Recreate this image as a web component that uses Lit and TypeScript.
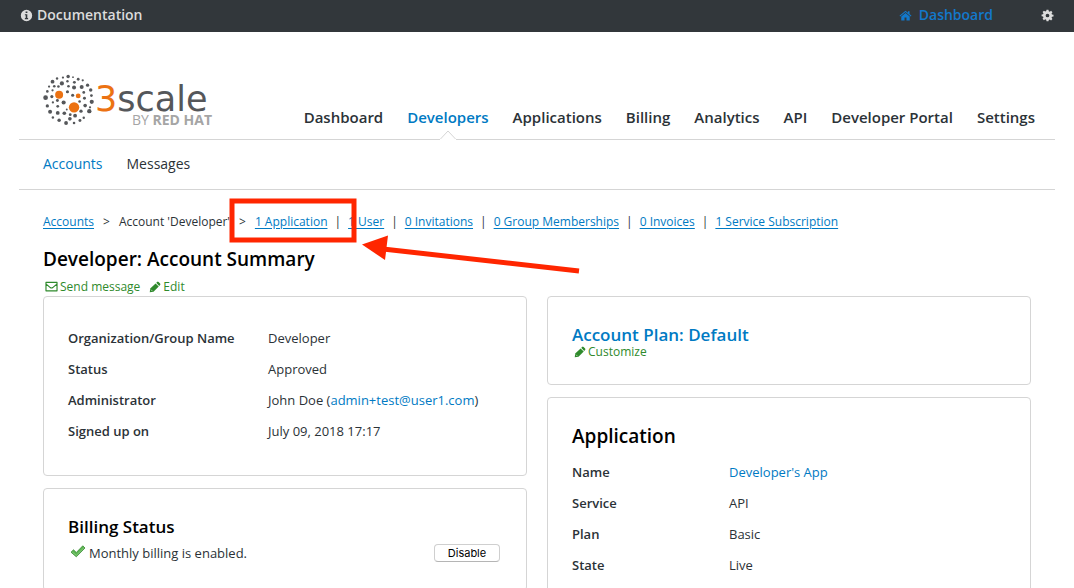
import { LitElement, html, svg, css } from "lit";
import { customElement } from "lit/decorators.js";
import { classMap } from "lit/directives/class-map.js";

const INFO = svg`<path fill-rule="evenodd" d="M8 1a7 7 0 1 1 0 14A7 7 0 0 1 8 1zM6.900 3v2h2.200V3zM6 6.500v1.300h1v3.400H6v1.300h4v-1.300H9V6.500z"/>`;
const HOME = svg`<path d="M8 2 .600 8.200l.900 1L8 3.800l6.500 5.400.900-1-2.400-2V2.700h-2v1.800z"/><path d="M8 5 2.800 9.300V14h4v-3.500h2.400V14h4V9.300z"/>`;
const COG = svg`<path fill-rule="evenodd" d="M6.800 1h2.400l.4 1.900 1.200.5 1.600-1.100 1.700 1.700-1.100 1.600.5 1.200 1.900.4v2l-1.900.4-.5 1.200 1.100 1.600-1.700 1.700-1.600-1.100-1.200.5L9.200 15H6.800l-.4-1.900-1.200-.5-1.600 1.100-1.700-1.700L3 10.400l-.5-1.200L.7 8.800V6.900l1.800-.4L3 5.300 1.900 3.700 3.600 2l1.600 1.100 1.200-.5zM8 5.700a2.300 2.300 0 1 0 0 4.600 2.300 2.300 0 0 0 0-4.600z"/>`;
const MAIL = svg`<path fill="none" stroke="currentColor" stroke-width="1.400" stroke-linejoin="round" d="M1.200 3h13.600v10.300H1.200zM1.500 5l5 4.300q1.500 1.100 3 0l5-4.300"/>`;
const PENCIL = svg`<path d="M1 15 1.600 10 8.800 3.200l4.200 4.200L6 14.400zM9.600 2.400l1.300-1.200q.9-.8 1.900.1l2 2q.9.900 0 1.900l-1.200 1.300z"/><path d="m2.600 11.500 2 2" stroke="#fff" stroke-width=".8"/>`;

const icon = (shape: unknown, size = "") =>
  html`<svg class="icon ${size}" viewBox="0 0 16 16" aria-hidden="true">${shape}</svg>`;

/* Dots of the brand globe: x, y, radius. */
const DOTS = [
  [69, 11, 2.6], [84, 8, 4], [98, 10, 2], [52, 14, 2.8], [113, 16, 3.2], [39, 23, 4.4], [66, 28, 4.8], [82, 22, 2.8],
  [102, 25, 3.4], [126, 19, 2.6], [123, 38, 4.6], [140, 33, 3.8], [56, 37, 3], [29, 37, 2.6], [44, 36, 3], [101, 40, 4.6],
  [85, 36, 3], [149, 47, 4], [82, 52, 3.6], [24, 51, 3], [39, 48, 2.6], [129, 54, 3.2], [151, 63, 3.2], [97, 62, 3.6],
  [19, 69, 5.4], [37, 66, 3.6], [117, 80, 3], [131, 71, 3.4], [152, 81, 4.8], [53, 77, 3.4], [40, 83, 2.6], [71, 83, 4.8],
  [24, 93, 3.8], [54, 94, 3.2], [133, 92, 4.2], [147, 97, 2.6], [80, 103, 2.2], [32, 110, 4.6], [54, 113, 4.4],
  [73, 114, 4.2], [90, 118, 3.2], [104, 121, 4.4], [121, 108, 3.8], [145, 108, 5], [40, 126, 2.8],
  [89, 130, 4.2], [129, 127, 2.8], [58, 134, 4], [118, 135, 3.4], [78, 142, 4.4], [101, 142, 3],
];

const MAIN_NAV = ["Dashboard", "Developers", "Applications", "Billing", "Analytics", "API", "Developer Portal", "Settings"];
const COUNTS = ["1 Application", "1 User", "0 Invitations", "0 Group Memberships", "0 Invoices", "1 Service Subscription"];

@customElement("app-root")
export class AppRoot extends LitElement {
  static styles = css`
    :host {
      display: block;
      height: 100vh;
      overflow: hidden;
      background: #fff;
      color: #2b3237;
      font: 12px/20px "Open Sans", "Noto Sans", sans-serif;
    }
    a { color: #007ac3; text-decoration: none; }
    h1, h2, dl, dd, p { margin: 0; }
    h1, h2 { color: #000; font-weight: 600; }
    .icon { width: 13px; height: 13px; fill: currentColor; flex: none; }
    .icon.small { width: 12px; height: 12px; }

    .topbar {
      display: flex;
      align-items: center;
      height: 32px;
      padding: 0 20px 2px;
      box-sizing: border-box;
      background: #32373b;
      font-size: 14px;
      font-weight: 600;
    }
    .topbar a { display: flex; align-items: center; gap: 4px; color: #dcdcdc; }
    .topbar .home { margin-left: auto; gap: 7px; color: #1279cc; }
    .topbar .gear {
      display: flex;
      margin-left: 48px;
      padding: 0;
      border: 0;
      background: none;
      color: #dcdcdc;
    }

    .page { padding: 0 19px; }
    .header {
      display: flex;
      justify-content: space-between;
      height: 107px;
      padding: 0 20px 0 24px;
      border-bottom: 1px solid #d5d5d5;
    }
    .logo { display: block; width: 172px; height: 54px; margin-top: 42px; flex: none; }
    .main-nav { display: flex; gap: 24px; padding-top: 75px; font-size: 15px; font-weight: 600; white-space: nowrap; }
    .main-nav a { position: relative; color: #2b3237; }
    .main-nav .current { color: #007ac3; }
    .caret { position: absolute; left: 50%; bottom: -1px; width: 18px; height: 10px; margin-left: -9px; }

    .sub-nav {
      display: flex;
      align-items: center;
      gap: 24px;
      height: 47px;
      padding: 0 24px 2px;
      border-bottom: 1px solid #d5d5d5;
      font-size: 14px;
    }
    .sub-nav .plain { color: #2b3237; }

    .content { padding: 0 24px; }
    .crumbs { position: relative; display: flex; gap: 9px; padding-top: 22px; white-space: nowrap; }
    .crumbs a { text-decoration: underline; text-underline-offset: 2px; }
    .counts { display: flex; gap: 7px; }
    .callout { position: absolute; left: 183px; top: 6px; width: 358px; height: 80px; pointer-events: none; }
    h1 { margin-top: 13px; font-size: 19px; line-height: 28px; }
    .actions { display: flex; gap: 9px; padding: 4px 2px 0; height: 19px; }
    .action { display: inline-flex; align-items: center; gap: 2px; color: #2f8a2c; }

    .columns { display: grid; grid-template-columns: 1fr 1fr; gap: 20px; }
    .column { display: flex; flex-direction: column; gap: 12px; }
    .card { padding: 26px 24px 28px; border: 1px solid #d5d5d5; border-radius: 4px; }
    .card h2 { font-size: 17px; line-height: 24px; }
    .card .major { font-size: 19px; }
    .card .action { display: flex; padding-left: 2px; line-height: 9px; height: 9px; }
    .facts { display: grid; grid-template-columns: 200px 1fr; font-size: 13px; line-height: 31px; }
    .facts dt { font-weight: 600; }
    .facts.compact { grid-template-columns: 157px 1fr; margin-top: 9px; }
    .billing { display: flex; align-items: center; justify-content: space-between; margin-top: 5px; height: 18px; font-size: 13px; }
    .billing p { display: flex; align-items: center; gap: 3px; padding-left: 2px; }
    .tick { width: 16px; height: 16px; }
    .disable {
      width: 66px;
      height: 18px;
      margin-right: 2px;
      padding: 0;
      border: 1px solid #cfcfcf;
      border-bottom-color: #b5b5b5;
      border-radius: 4px;
      background: #fff;
      color: #000;
      font: 11px/16px Inter, "Liberation Sans", sans-serif;
    }
  `;

  private logo() {
    return html`<svg class="logo" viewBox="0 0 172 54" role="img" aria-label="3scale by Red Hat">
      <g transform="translate(-4 -1) scale(0.347)" fill="#55575a">
        ${DOTS.map(([x, y, r]) => svg`<circle cx=${x} cy=${y + 2} r=${r * 1.25}></circle>`)}
        <g fill="#ec7212">
          <circle cx="58" cy="63" r="11.500"></circle>
          <circle cx="113" cy="66" r="7"></circle>
          <circle cx="101" cy="99" r="15"></circle>
        </g>
      </g>
      <g font-family="DejaVu Sans">
        <text x="52" y="37" font-size="35" fill="#55575a"><tspan fill="#ec7212">3</tspan>scale</text>
        <text x="89" y="51" font-size="14" fill="#a5a5a5" font-family="Open Sans">BY <tspan font-weight="700">RED HAT</tspan></text>
      </g>
    </svg>`;
  }

  private facts(rows: [string, unknown][], compact = false) {
    return html`<dl class=${classMap({ facts: true, compact })}>
      ${rows.map(([name, value]) => html`<dt>${name}</dt><dd>${value}</dd>`)}
    </dl>`;
  }

  render() {
    return html`
      <div class="topbar">
        <a href="#docs">${icon(INFO)}Documentation</a>
        <a class="home" href="#dashboard">${icon(HOME)}Dashboard</a>
        <button class="gear" aria-label="Account settings">${icon(COG)}</button>
      </div>
      <div class="page">
        <header class="header">
          ${this.logo()}
          <nav class="main-nav" aria-label="Main">
            ${MAIN_NAV.map((label) => {
              const current = label === "Developers";
              return html`<a href="#nav" class=${classMap({ current })}>${label}${current
                ? html`<svg class="caret" viewBox="0 0 18 10"><path d="M0 9.500h1L9 1l8 8.500h1" fill="#fff" stroke="#d5d5d5"></path><path d="M1 9.500h16" stroke="#fff"></path></svg>`
                : ""}</a>`;
            })}
          </nav>
        </header>
        <nav class="sub-nav" aria-label="Developers">
          <a href="#accounts">Accounts</a>
          <a class="plain" href="#messages">Messages</a>
        </nav>
        <main class="content">
          <nav class="crumbs" aria-label="Breadcrumb">
            <a href="#accounts">Accounts</a><span>&gt;</span><span>Account 'Developer'</span><span>&gt;</span>
            <div class="counts">
              ${COUNTS.map((label, i) => html`${i ? html`<span>|</span>` : ""}<a href="#item">${label}</a>`)}
            </div>
            <svg class="callout" viewBox="0 0 358 80" aria-hidden="true">
              <rect x="6" y="5" width="122" height="39" fill="none" stroke="#ff2600" stroke-width="5"></rect>
              <path d="M157 53 353 75" stroke="#ff2600" stroke-width="5"></path>
              <path d="M136 48.500 162 39.500 159 64z" fill="#ff2600"></path>
            </svg>
          </nav>
          <h1>Developer: Account Summary</h1>
          <div class="actions">
            <a class="action" href="#send">${icon(MAIL)}Send message</a>
            <a class="action" href="#edit">${icon(PENCIL, "small")}Edit</a>
          </div>
          <div class="columns">
            <div class="column">
              <section class="card">
                ${this.facts([
                  ["Organization/Group Name", "Developer"],
                  ["Status", "Approved"],
                  ["Administrator", html`John Doe (<a href="mailto:admin+test@user1.com">admin+test@user1.com</a>)`],
                  ["Signed up on", "July 09, 2018 17:17"],
                ])}
              </section>
              <section class="card">
                <h2>Billing Status</h2>
                <div class="billing">
                  <p>
                    <svg class="tick" viewBox="0 0 16 16" aria-hidden="true"><path d="M1 7.200 3.500 4.800 6.300 7.500 12.800.8 15 3 6.300 11.800z" fill="#5cb552" stroke="#3b8a36" stroke-width=".8" stroke-linejoin="round"></path><path d="M2.300 7.100 6.300 10.300 13.800 2.900" fill="none" stroke="#8ed184" stroke-width=".8"></path></svg>
                    Monthly billing is enabled.
                  </p>
                  <button class="disable">Disable</button>
                </div>
              </section>
            </div>
            <div class="column">
              <section class="card">
                <h2><a href="#plan">Account Plan: Default</a></h2>
                <a class="action" href="#customize">${icon(PENCIL, "small")}Customize</a>
              </section>
              <section class="card">
                <h2 class="major">Application</h2>
                ${this.facts([
                  ["Name", html`<a href="#app">Developer's App</a>`],
                  ["Service", "API"],
                  ["Plan", "Basic"],
                  ["State", "Live"],
                ], true)}
              </section>
            </div>
          </div>
        </main>
      </div>
    `;
  }
}
